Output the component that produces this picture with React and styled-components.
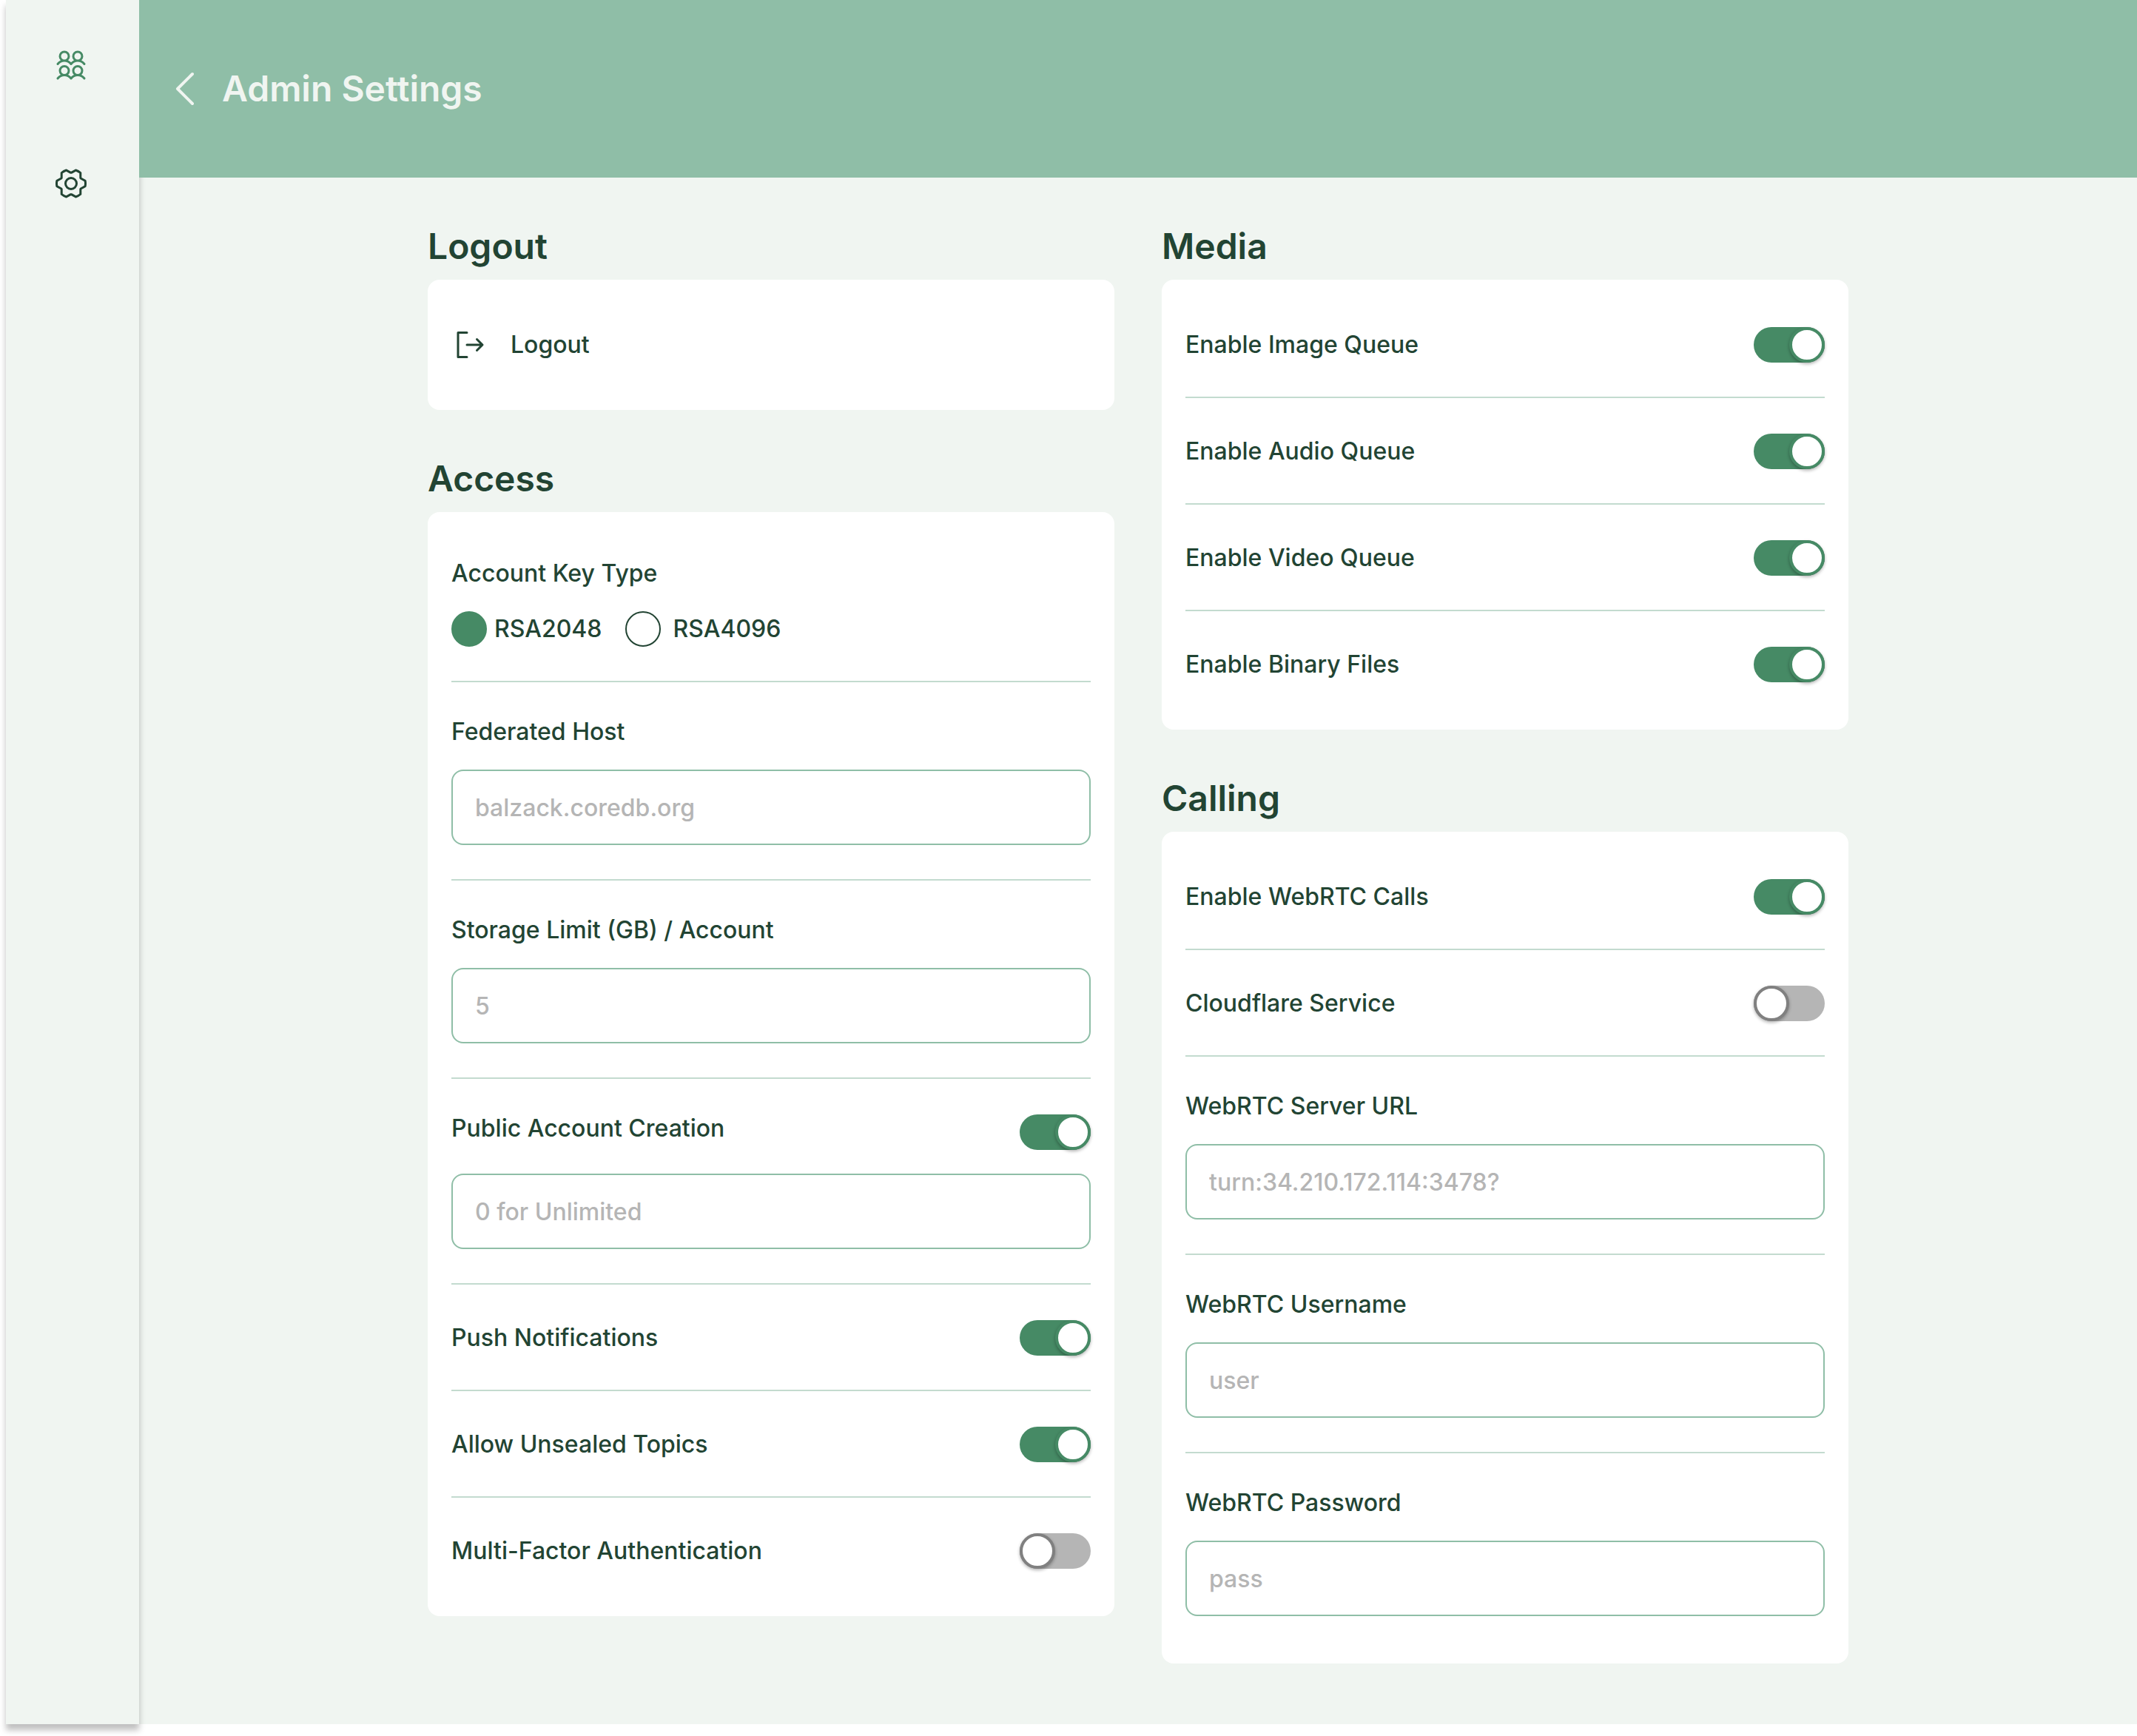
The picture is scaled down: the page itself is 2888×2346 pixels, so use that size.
import React from "react";
import styled, { createGlobalStyle, ThemeProvider } from "styled-components";
import { PiCaretLeft, PiGearSix, PiSignOut, PiUsersFour } from "react-icons/pi";

const theme = {
  surface: "#f0f5f1",
  card: "#ffffff",
  header: "#8fbea7",
  primary: "#468a65",
  text: "#224433",
  divider: "#c3dbcf",
  muted: "#b5b5b5",
  knob: "#808080",
};

const GlobalStyle = createGlobalStyle`
  *, *::before, *::after { box-sizing: border-box; }
  body {
    margin: 0;
    background: #ffffff;
    font-family: Inter, "Liberation Sans", sans-serif;
    font-size: 32px;
    font-weight: 500;
    line-height: 38px;
  }
`;

const Shell = styled.div`
  display: flex;
  min-height: 100vh;
  padding: 0 0 16px 8px;
  color: ${({ theme }) => theme.text};
`;

const Sidebar = styled.nav`
  position: relative;
  z-index: 1;
  flex: none;
  display: flex;
  flex-direction: column;
  gap: 112px;
  width: 180px;
  padding: 64px;
  background: ${({ theme }) => theme.surface};
  box-shadow: 0 8px 8px rgba(0, 0, 0, 0.25);
`;

const IconButton = styled.button`
  display: flex;
  padding: 0;
  border: 0;
  background: none;
  color: ${({ theme, $tone }) => theme[$tone]};
  font-size: ${({ $size }) => $size}px;
  cursor: pointer;
`;

const Page = styled.div`
  flex: 1;
  min-width: 0;
  background: ${({ theme }) => theme.surface};
`;

const Header = styled.header`
  position: relative;
  z-index: 2;
  display: flex;
  align-items: center;
  gap: 16px;
  height: 240px;
  padding: 0 32px;
  background: ${({ theme }) => theme.header};
  color: ${({ theme }) => theme.surface};
`;

const Title = styled.h1`
  margin: 0;
  font-size: 48px;
  font-weight: 600;
  line-height: 58px;
`;

const Columns = styled.main`
  display: grid;
  grid-template-columns: repeat(2, minmax(0, 1fr));
  gap: 64px;
  max-width: 1920px;
  margin: 0 auto;
  padding: 64px 0;
`;

const Column = styled.div`
  display: flex;
  flex-direction: column;
  gap: 64px;
`;

const Section = styled.section`
  display: flex;
  flex-direction: column;
  gap: 16px;
`;

const SectionTitle = styled.h2`
  margin: 0;
  font-size: 48px;
  font-weight: 600;
  line-height: 58px;
`;

const Card = styled.div`
  padding: 16px 32px;
  border-radius: 16px;
  background: ${({ theme }) => theme.card};
`;

const Row = styled.div`
  display: flex;
  flex-direction: column;
  gap: 32px;
  padding: 48px 0 46px;
  border-bottom: 2px solid ${({ theme }) => theme.divider};

  &:last-child {
    border-bottom-color: transparent;
  }
`;

const RowHead = styled.div`
  display: flex;
  align-items: ${({ $align }) => $align || "center"};
  justify-content: space-between;
`;

const Label = styled.label``;

const Switch = styled.input.attrs({ type: "checkbox", role: "switch" })`
  appearance: none;
  flex: none;
  display: flex;
  justify-content: flex-start;
  width: 96px;
  height: 48px;
  margin: 0;
  border-radius: 24px;
  background: ${({ theme }) => theme.muted};
  cursor: pointer;

  &::before {
    content: "";
    width: 48px;
    height: 48px;
    border: 4px solid ${({ theme }) => theme.knob};
    border-radius: 50%;
    background: #ffffff;
    box-shadow: 0 2px 4px rgba(0, 0, 0, 0.3);
  }

  &:checked {
    justify-content: flex-end;
    background: ${({ theme }) => theme.primary};
  }

  &:checked::before {
    border-color: ${({ theme }) => theme.primary};
  }
`;

const TextInput = styled.input`
  width: 100%;
  height: 102px;
  padding: 0 30px;
  border: 2px solid ${({ theme }) => theme.header};
  border-radius: 16px;
  background: #ffffff;
  color: inherit;
  font: inherit;

  &::placeholder {
    color: ${({ theme }) => theme.muted};
    opacity: 1;
  }
`;

const Choices = styled.fieldset`
  display: contents;
`;

const Legend = styled.legend`
  padding: 0;
`;

const ChoiceList = styled.div`
  display: flex;
  gap: 32px;
`;

const Choice = styled.label`
  display: flex;
  align-items: center;
  gap: ${({ $gap }) => $gap}px;
  cursor: pointer;
`;

const Radio = styled.input.attrs({ type: "radio" })`
  appearance: none;
  width: 48px;
  height: 48px;
  margin: 0;
  border: 2px solid ${({ theme }) => theme.text};
  border-radius: 50%;

  &:checked {
    border-color: ${({ theme }) => theme.primary};
    background: ${({ theme }) => theme.primary};
  }
`;

const ActionButton = styled.button`
  display: flex;
  align-items: center;
  gap: 32px;
  padding: 0;
  border: 0;
  background: none;
  color: inherit;
  font: inherit;
  cursor: pointer;

  svg {
    font-size: 48px;
  }
`;

function ToggleRow({ id, label, on }) {
  return (
    <Row>
      <RowHead>
        <Label htmlFor={id}>{label}</Label>
        <Switch id={id} defaultChecked={on} />
      </RowHead>
    </Row>
  );
}

function FieldRow({ id, label, placeholder, type = "text" }) {
  return (
    <Row>
      <Label htmlFor={id}>{label}</Label>
      <TextInput id={id} type={type} placeholder={placeholder} />
    </Row>
  );
}

function Group({ title, children }) {
  return (
    <Section>
      <SectionTitle>{title}</SectionTitle>
      <Card>{children}</Card>
    </Section>
  );
}

export default function App() {
  return (
    <ThemeProvider theme={theme}>
      <GlobalStyle />
      <Shell>
        <Sidebar aria-label="Main">
          <IconButton $size={48} $tone="primary" aria-label="Accounts">
            <PiUsersFour />
          </IconButton>
          <IconButton $size={48} $tone="text" aria-label="Settings">
            <PiGearSix />
          </IconButton>
        </Sidebar>
        <Page>
          <Header>
            <IconButton $size={64} $tone="surface" aria-label="Back">
              <PiCaretLeft />
            </IconButton>
            <Title>Admin Settings</Title>
          </Header>
          <Columns>
            <Column>
              <Group title="Logout">
                <Row>
                  <ActionButton type="button">
                    <PiSignOut />
                    Logout
                  </ActionButton>
                </Row>
              </Group>
              <Group title="Access">
                <Row>
                  <Choices>
                    <Legend>Account Key Type</Legend>
                    <ChoiceList>
                      <Choice $gap={10}>
                        <Radio name="keyType" value="RSA2048" defaultChecked />
                        RSA2048
                      </Choice>
                      <Choice $gap={16}>
                        <Radio name="keyType" value="RSA4096" />
                        RSA4096
                      </Choice>
                    </ChoiceList>
                  </Choices>
                </Row>
                <FieldRow id="host" label="Federated Host" placeholder="balzack.coredb.org" />
                <FieldRow id="storage" label="Storage Limit (GB) / Account" placeholder="5" />
                <Row>
                  <RowHead $align="flex-start">
                    <Label htmlFor="public">Public Account Creation</Label>
                    <Switch id="public" defaultChecked />
                  </RowHead>
                  <TextInput aria-label="Public account limit" placeholder="0 for Unlimited" />
                </Row>
                <ToggleRow id="push" label="Push Notifications" on />
                <ToggleRow id="unsealed" label="Allow Unsealed Topics" on />
                <ToggleRow id="mfa" label="Multi-Factor Authentication" />
              </Group>
            </Column>
            <Column>
              <Group title="Media">
                <ToggleRow id="image" label="Enable Image Queue" on />
                <ToggleRow id="audio" label="Enable Audio Queue" on />
                <ToggleRow id="video" label="Enable Video Queue" on />
                <ToggleRow id="binary" label="Enable Binary Files" on />
              </Group>
              <Group title="Calling">
                <ToggleRow id="webrtc" label="Enable WebRTC Calls" on />
                <ToggleRow id="cloudflare" label="Cloudflare Service" />
                <FieldRow id="server" label="WebRTC Server URL" placeholder="turn:34.210.172.114:3478?" />
                <FieldRow id="username" label="WebRTC Username" placeholder="user" />
                <FieldRow id="password" label="WebRTC Password" placeholder="pass" type="password" />
              </Group>
            </Column>
          </Columns>
        </Page>
      </Shell>
    </ThemeProvider>
  );
}
